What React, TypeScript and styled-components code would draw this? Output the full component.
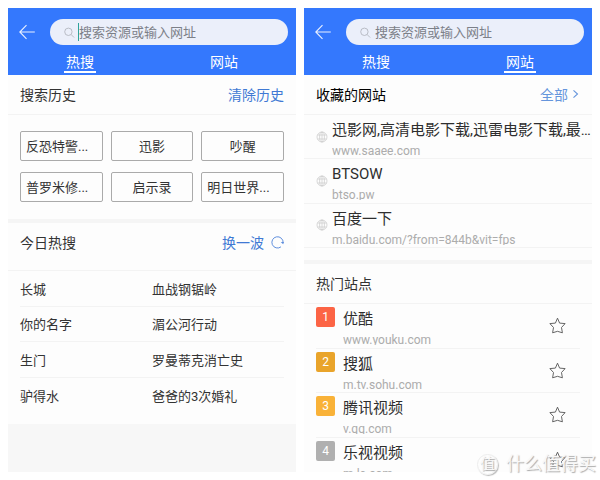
import React from 'react';
import styled, { createGlobalStyle } from 'styled-components';

const GlobalStyle = createGlobalStyle`
  * { box-sizing: border-box; }
  body {
    margin: 0;
    background: #fff;
    color: #333;
    font-family: Roboto, 'Noto Sans CJK SC', sans-serif;
    font-size: 13px;
  }
  button {
    padding: 0;
    border: 0;
    background: none;
    color: inherit;
    font: inherit;
    cursor: pointer;
  }
  a { color: inherit; text-decoration: none; }
  h2 { margin: 0; }
  ul { margin: 0; padding: 0; list-style: none; }
`;

const Page = styled.main`
  position: relative;
  display: grid;
  grid-template-columns: 1fr 1fr;
  gap: 8px;
  height: 100vh;
  padding: 8px;
  overflow: hidden;
`;

const Panel = styled.section`
  min-width: 0;
  min-height: 0;
  overflow: hidden;
  background: #f7f7f7;
`;

const Header = styled.header`
  padding-top: 11px;
  background: #3478fd;
  color: #fff;
`;

const SearchRow = styled.div`
  display: flex;
  align-items: center;
  padding: 0 8px 0 11px;
  gap: 15px;
`;

const BackButton = styled.button`
  display: flex;
  flex: none;
`;

const SearchPill = styled.label`
  display: flex;
  flex: 1;
  align-items: center;
  min-width: 0;
  height: 26px;
  padding: 0 14px;
  border-radius: 13px;
  background: #ebeffa;
  svg { flex: none; }
`;

const Caret = styled.span<{ $active: boolean }>`
  flex: none;
  width: 1px;
  height: 18px;
  margin-left: 3px;
  background: ${(p) => (p.$active ? '#2fa39b' : 'transparent')};
`;

const SearchInput = styled.input`
  flex: 1;
  min-width: 0;
  padding: 0;
  border: 0;
  outline: 0;
  background: none;
  color: #333;
  font: inherit;
  &::placeholder { color: #7c8088; opacity: 1; }
`;

const Tabs = styled.nav`
  display: grid;
  grid-template-columns: 1fr 1fr;
  justify-items: center;
  height: 30px;
  padding-top: 8px;
`;

const Tab = styled.button<{ $active: boolean }>`
  width: 32px;
  height: 20px;
  border-bottom: 2px solid ${(p) => (p.$active ? '#fff' : 'transparent')};
  font-size: 14px;
  line-height: 18px;
  white-space: nowrap;
`;

const Block = styled.div`
  background: #fdfdfd;
  & + & { border-top: 4px solid #f5f5f5; }
`;

const BlockHead = styled.div<{ $tall?: boolean }>`
  display: flex;
  align-items: center;
  justify-content: space-between;
  height: ${(p) => (p.$tall ? 48 : 40)}px;
  padding: 0 12px ${(p) => (p.$tall ? 9 : 2)}px;
  border-bottom: 1px solid #f3f3f3;
`;

const Title = styled.h2<{ $strong?: boolean }>`
  color: ${(p) => (p.$strong ? '#000' : '#333')};
  font-size: 14px;
  font-weight: 400;
`;

const Action = styled.button<{ $soft?: boolean }>`
  display: flex;
  align-items: center;
  gap: ${(p) => (p.$soft ? 4 : 7)}px;
  color: ${(p) => (p.$soft ? '#6595dc' : '#4079d4')};
  font-size: 14px;
`;

const Chips = styled.div`
  display: grid;
  grid-template-columns: repeat(3, 1fr);
  gap: 11px 8px;
  padding: 16px 12px 17px;
`;

const Chip = styled.button<{ $long: boolean }>`
  height: 30px;
  padding: 0 5px 2px;
  border: 1px solid #aaa;
  border-radius: 2px;
  text-align: ${(p) => (p.$long ? 'left' : 'center')};
  white-space: nowrap;
`;

const HotList = styled.ul`
  display: grid;
  grid-auto-rows: 1fr;
  min-height: 142px;
  margin: 0 12px;
`;

const HotRow = styled.li`
  display: grid;
  grid-template-columns: 1fr 1fr;
  align-items: center;
  border-bottom: 1px solid #f3f3f3;
  &:last-child { border-bottom: 0; }
`;

const HotBlock = styled(Block)`
  padding-bottom: 11px;
`;

const SavedBlock = styled(Block)`
  padding-bottom: 12px;
`;

const SiteList = styled.ul<{ $inset?: boolean }>`
  display: grid;
  grid-auto-rows: 1fr;
  min-height: ${(p) => (p.$inset ? 178 : 133)}px;
  padding: 0 ${(p) => (p.$inset ? 12 : 0)}px;
`;

const SiteRow = styled.li<{ $inset?: boolean }>`
  display: flex;
  align-items: center;
  gap: ${(p) => (p.$inset ? 8 : 4)}px;
  min-width: 0;
  padding-left: ${(p) => (p.$inset ? 0 : 12)}px;
  border-bottom: 1px solid #f3f3f3;
  svg { flex: none; }
`;

const SiteLink = styled.a`
  flex: 1;
  align-self: stretch;
  min-width: 0;
  padding-top: 4px;
`;

const SiteName = styled.span`
  display: block;
  color: #2e2e2e;
  font-size: 15px;
  line-height: 22px;
  white-space: nowrap;
`;

const SiteUrl = styled.span`
  display: block;
  height: 15px;
  overflow: hidden;
  color: #acacac;
  font-size: 12px;
  line-height: 20px;
  white-space: nowrap;
`;

const Rank = styled.span<{ $color: string }>`
  flex: none;
  align-self: flex-start;
  width: 19px;
  height: 20px;
  margin-top: 3px;
  border-radius: 2px;
  background: ${(p) => p.$color};
  color: #fff;
  font-size: 12px;
  line-height: 20px;
  text-align: center;
`;

const StarButton = styled.button`
  display: flex;
  margin-right: 14px;
`;

const Watermark = styled.div`
  position: absolute;
  right: 4px;
  bottom: 3px;
  display: flex;
  align-items: center;
  gap: 8px;
  color: #f8f8f8;
  font-size: 18px;
  line-height: 26px;
  text-shadow: 1px 1px 1px #aaa;
  pointer-events: none;
`;

const WatermarkSeal = styled.span`
  width: 21px;
  height: 21px;
  border: 1px solid #ededed;
  border-radius: 50%;
  box-shadow: 1px 1px 1px #bbb;
  font-size: 15px;
  line-height: 18px;
  text-align: center;
`;

const ArrowIcon = () => (
  <svg width="16" height="16" viewBox="0 0 16 16" fill="none" stroke="#e9f0ff" strokeWidth="1.1">
    <path d="M7.5 1.2 0.8 8l6.7 6.8M0.8 8h15" />
  </svg>
);

const SearchIcon = () => (
  <svg width="11" height="11" viewBox="0 0 11 11" fill="none" stroke="#b3b7c0" strokeWidth="0.9">
    <circle cx="4.4" cy="4.8" r="3.7" />
    <path d="m7.1 7.5 3 3" />
  </svg>
);

const RefreshIcon = () => (
  <svg width="13" height="13" viewBox="0 0 12 12" fill="none" stroke="#5b8cdc" strokeWidth="0.9">
    <path d="M9.2 10A5.2 5.2 0 1 1 11.2 6.2" />
    <path d="M9 5.6h3L11.2 7.6z" fill="#5b8cdc" stroke="none" />
  </svg>
);

const ChevronIcon = () => (
  <svg width="8" height="10" viewBox="0 0 8 10" fill="none" stroke="#6595dc" strokeWidth="1.1">
    <path d="m1.5 1.3 4 3.7-4 3.7" />
  </svg>
);

const GlobeIcon = () => (
  <svg width="12" height="12" viewBox="0 0 12 12" fill="none" stroke="#c9c9c9" strokeWidth="0.7">
    <circle cx="6" cy="6" r="5" />
    <ellipse cx="6" cy="6" rx="2.4" ry="5" />
    <path d="M6 1v10M1.6 4h8.8M1.6 8h8.8" />
  </svg>
);

const StarIcon = () => (
  <svg width="17" height="17" viewBox="0 0 17 17" fill="none" stroke="#555" strokeWidth="0.9">
    <path d="m8.5 1.2 2.1 4.9 5.5.5-3.6 3.9.9 5.3-4.9-1.5-4.9 1.5.9-5.3L.9 6.6l5.5-.5z" />
  </svg>
);

const history = ['反恐特警...', '迅影', '吵醒', '普罗米修...', '启示录', '明日世界...'];

const hot = [
  ['长城', '血战钢锯岭'],
  ['你的名字', '湄公河行动'],
  ['生门', '罗曼蒂克消亡史'],
  ['驴得水', '爸爸的3次婚礼'],
];

const saved = [
  { name: '迅影网,高清电影下载,迅雷电影下载,最…', url: 'www.saaee.com' },
  { name: 'BTSOW', url: 'btso.pw' },
  { name: '百度一下', url: 'm.baidu.com/?from=844b&vit=fps' },
];

const popular = [
  { name: '优酷', url: 'www.youku.com', color: '#fc6445' },
  { name: '搜狐', url: 'm.tv.sohu.com', color: '#e9a42b' },
  { name: '腾讯视频', url: 'v.qq.com', color: '#f9b238' },
  { name: '乐视视频', url: 'm.le.com', color: '#b0b0b0' },
];

function TopBar({ active, focused }: { active: string; focused: boolean }) {
  return (
    <Header>
      <SearchRow>
        <BackButton aria-label="返回"><ArrowIcon /></BackButton>
        <SearchPill>
          <SearchIcon />
          <Caret $active={focused} />
          <SearchInput type="text" aria-label="搜索" placeholder="搜索资源或输入网址" />
        </SearchPill>
      </SearchRow>
      <Tabs>
        {['热搜', '网站'].map((tab) => (
          <Tab key={tab} $active={tab === active}>{tab}</Tab>
        ))}
      </Tabs>
    </Header>
  );
}

export default function App() {
  return (
    <>
      <GlobalStyle />
      <Page>
        <Panel>
          <TopBar active="热搜" focused />
          <Block>
            <BlockHead>
              <Title>搜索历史</Title>
              <Action>清除历史</Action>
            </BlockHead>
            <Chips>
              {history.map((word) => (
                <Chip key={word} $long={word.endsWith('...')}>{word}</Chip>
              ))}
            </Chips>
          </Block>
          <HotBlock>
            <BlockHead $tall>
              <Title>今日热搜</Title>
              <Action>换一波<RefreshIcon /></Action>
            </BlockHead>
            <HotList>
              {hot.map(([first, second]) => (
                <HotRow key={first}>
                  <a href="#hot">{first}</a>
                  <a href="#hot">{second}</a>
                </HotRow>
              ))}
            </HotList>
          </HotBlock>
        </Panel>
        <Panel>
          <TopBar active="网站" focused={false} />
          <SavedBlock>
            <BlockHead>
              <Title $strong>收藏的网站</Title>
              <Action $soft>全部<ChevronIcon /></Action>
            </BlockHead>
            <SiteList>
              {saved.map((site) => (
                <SiteRow key={site.url}>
                  <GlobeIcon />
                  <SiteLink href="#site">
                    <SiteName>{site.name}</SiteName>
                    <SiteUrl>{site.url}</SiteUrl>
                  </SiteLink>
                </SiteRow>
              ))}
            </SiteList>
          </SavedBlock>
          <Block>
            <BlockHead>
              <Title>热门站点</Title>
            </BlockHead>
            <SiteList $inset>
              {popular.map((site, index) => (
                <SiteRow key={site.url} $inset>
                  <Rank $color={site.color}>{index + 1}</Rank>
                  <SiteLink href="#site">
                    <SiteName>{site.name}</SiteName>
                    <SiteUrl>{site.url}</SiteUrl>
                  </SiteLink>
                  <StarButton aria-label="收藏"><StarIcon /></StarButton>
                </SiteRow>
              ))}
            </SiteList>
          </Block>
        </Panel>
        <Watermark>
          <WatermarkSeal>值</WatermarkSeal>
          什么值得买
        </Watermark>
      </Page>
    </>
  );
}
